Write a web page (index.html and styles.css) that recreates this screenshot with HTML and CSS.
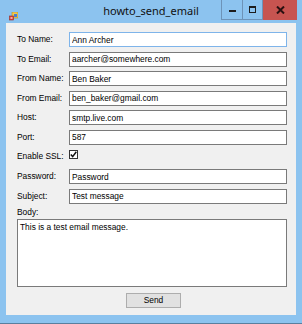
FILE: index.html
```html
<!DOCTYPE html>
<html lang="en">
<head>
    <meta charset="UTF-8">
    <meta name="viewport" content="width=device-width, initial-scale=1.0">
    <title>howto_send_email</title>
    <link rel="stylesheet" href="styles.css">
</head>
<body>
    <div class="window">
        <div class="title-bar">
            <div class="app-icon">
                <svg width="9" height="9" viewBox="0 0 9 9">
                    <rect x="3" y="0" width="6" height="6" fill="#f2c94c" stroke="#b08a2a" stroke-width="0.6"/>
                    <rect x="5" y="2" width="3" height="3" fill="#4a7fd0"/>
                    <rect x="0.5" y="4" width="4" height="4" fill="#d9453c" stroke="#9a2a22" stroke-width="0.6"/>
                    <rect x="1.5" y="5" width="2" height="2" fill="#f6a6a0"/>
                </svg>
            </div>
            <div class="title">howto_send_email</div>
            <div class="caption-buttons">
                <div class="cap-btn btn-min"><span class="min-glyph"></span></div>
                <div class="cap-btn btn-max"><span class="max-glyph"></span></div>
                <div class="cap-btn btn-close">
                    <svg width="9" height="8" viewBox="0 0 9 8">
                        <path d="M1 0.5 L8 7.5 M8 0.5 L1 7.5" stroke="#2a1010" stroke-width="2"/>
                    </svg>
                </div>
            </div>
        </div>

        <div class="client">
            <form class="mail-form" onsubmit="return false;">
                <label for="to_name">To Name:</label>
                <input type="text" id="to_name" class="focused" value="Ann Archer">

                <label for="to_email">To Email:</label>
                <input type="text" id="to_email" value="aarcher@somewhere.com">

                <label for="from_name">From Name:</label>
                <input type="text" id="from_name" value="Ben Baker">

                <label for="from_email">From Email:</label>
                <input type="text" id="from_email" value="ben_baker@gmail.com">

                <label for="host">Host:</label>
                <input type="text" id="host" value="smtp.live.com">

                <label for="port">Port:</label>
                <input type="text" id="port" value="587">

                <label for="ssl" class="ssl-label">Enable SSL:</label>
                <div class="check-cell">
                    <span class="checkbox" id="ssl">
                        <svg width="7" height="7" viewBox="0 0 7 7">
                            <path d="M0.8 3.4 L2.7 5.6 L6.3 0.8" fill="none" stroke="#111" stroke-width="1.5"/>
                        </svg>
                    </span>
                </div>

                <label for="password">Password:</label>
                <input type="text" id="password" value="Password">

                <label for="subject">Subject:</label>
                <input type="text" id="subject" value="Test message">
            </form>

            <div class="body-section">
                <label for="body">Body:</label>
                <textarea id="body">This is a test email message.</textarea>
            </div>

            <div class="actions">
                <button type="button" class="send-btn">Send</button>
            </div>
        </div>
    </div>
</body>
</html>
```

FILE: styles.css
```css
body {
    margin: 0;
    background: #ffffff;
    font-family: "Liberation Sans", Arial, sans-serif;
}
.window {
    width: 302px;
    height: 324px;
    box-sizing: border-box;
    background-color: #8cc3ef;
    padding: 0 6px 8px 6px;
    display: flex;
    flex-direction: column;
    border-bottom: 1px solid #5a7f9e;
}
/* Title bar */
.title-bar {
    height: 23px;
    display: grid;
    grid-template-columns: 1fr auto 1fr;
    align-items: start;
    margin: 0 -6px;
}
.app-icon {
    padding: 7px 0 0 9px;
    height: 9px;
}
.title {
    font-family: "Noto Sans", "Open Sans", sans-serif;
    font-size: 11px;
    line-height: 12px;
    padding-top: 5px;
    color: #111;
}
.caption-buttons {
    display: flex;
    justify-content: flex-end;
    padding-right: 5px;
}
.cap-btn {
    height: 20px;
    box-sizing: border-box;
    display: flex;
    align-items: center;
    justify-content: center;
}
.btn-min {
    width: 22px;
    border: 1px solid #6d93b8;
    border-top: none;
}
.btn-max {
    width: 20px;
    border-bottom: 1px solid #6d93b8;
    border-right: 1px solid #6d93b8;
}
.btn-close {
    width: 34px;
    background-color: #c75450;
}
.min-glyph {
    width: 7px;
    height: 2px;
    margin-top: 2px;
    background: #1d1d1d;
}
.max-glyph {
    width: 5px;
    height: 4px;
    border: 1px solid #1d1d1d;
    border-top-width: 2px;
}
/* Client area */
.client {
    flex: 1;
    background-color: #f0f0f0;
    padding: 9px 9px 0 11px;
    display: flex;
    flex-direction: column;
}
.mail-form {
    display: grid;
    grid-template-columns: 52px 1fr;
    grid-auto-rows: 15px;
    row-gap: 4.6px;
    margin: 0;
}
.mail-form label,
.body-section label {
    font-size: 8.4px;
    color: #000;
    line-height: 15px;
    white-space: nowrap;
}
.mail-form input {
    font-family: "Liberation Sans", Arial, sans-serif;
    font-size: 8.4px;
    height: 15px;
    box-sizing: border-box;
    border: 1px solid #7a7a7a;
    padding: 0 2px;
    margin: 0;
    background: #ffffff;
    color: #000;
    outline: none;
}
.mail-form input.focused {
    border-color: #7eb4ea;
}
.mail-form .ssl-label {
    line-height: 12px;
}
.mail-form .check-cell {
    height: 12px;
}
.mail-form > :nth-child(13),
.mail-form > :nth-child(14) {
    grid-row: 7;
    height: 12px;
}
.checkbox {
    display: flex;
    align-items: center;
    justify-content: center;
    width: 9px;
    height: 9px;
    box-sizing: border-box;
    margin-top: 0.5px;
    border: 1px solid #333;
    background: #ffffff;
}
.body-section {
    display: flex;
    flex-direction: column;
    margin-top: 1px;
}
.body-section label {
    line-height: 14px;
}
.body-section textarea {
    font-family: "Liberation Sans", Arial, sans-serif;
    font-size: 8.4px;
    height: 68px;
    box-sizing: border-box;
    border: 1px solid #7a7a7a;
    padding: 2px 2px;
    margin: 0;
    resize: none;
    background: #ffffff;
    color: #000;
    outline: none;
}
.actions {
    display: flex;
    justify-content: center;
    padding-top: 6px;
}
.send-btn {
    font-family: "Liberation Sans", Arial, sans-serif;
    font-size: 8.4px;
    width: 55px;
    height: 15px;
    padding: 0;
    margin-left: 3px;
    background: #e1e1e1;
    border: 1px solid #adadad;
    color: #000;
}
```
